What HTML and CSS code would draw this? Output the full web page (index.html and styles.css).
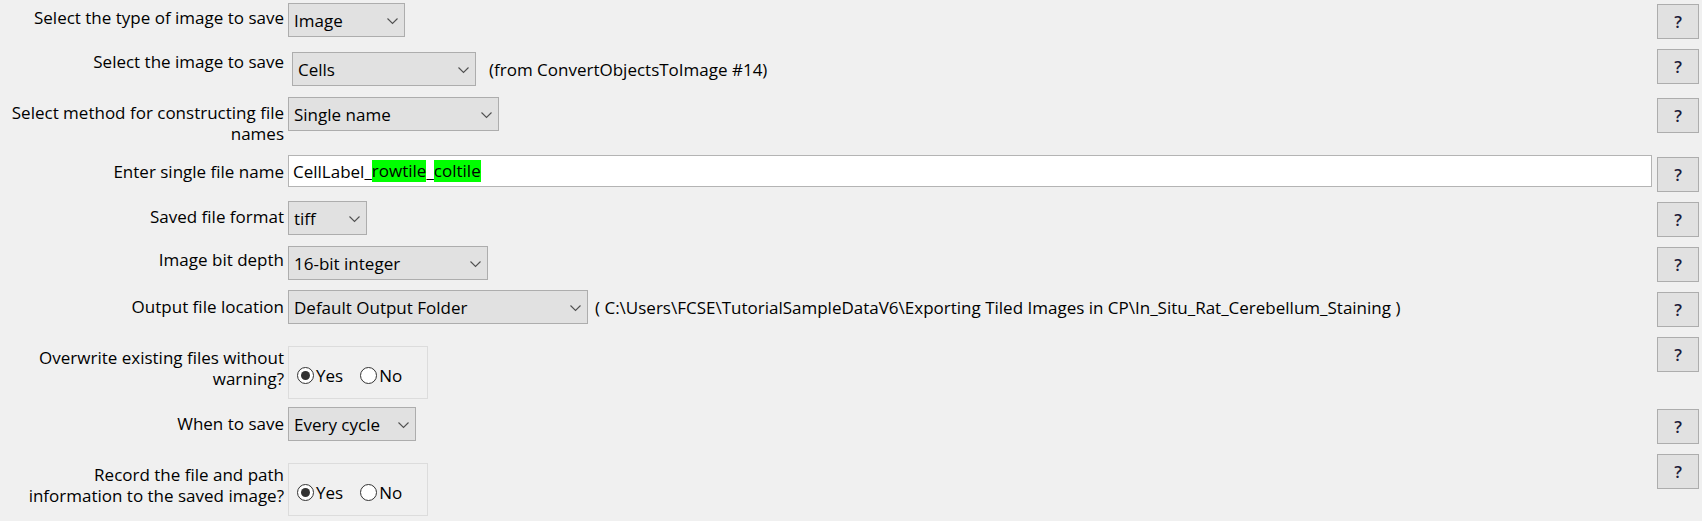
FILE: index.html
```html
<!DOCTYPE html>
<html>
<head>
<meta charset="utf-8">
<link rel="stylesheet" href="styles.css">
</head>
<body>
<div class="form">
  <!-- Row 1 -->
  <div class="lbl t4">Select the type of image to save</div>
  <div class="ctl">
    <div class="combo w116"><span>Image</span><svg class="chev" width="11" height="7" viewBox="0 0 11 7"><path d="M0.5 0.5 L5.5 5.5 L10.5 0.5"/></svg></div>
  </div>
  <div class="help t1">?</div>

  <!-- Row 2 -->
  <div class="lbl t2">Select the image to save</div>
  <div class="ctl t3 inset">
    <div class="combo w184"><span>Cells</span><svg class="chev" width="11" height="7" viewBox="0 0 11 7"><path d="M0.5 0.5 L5.5 5.5 L10.5 0.5"/></svg></div>
    <span class="note gap13">(from ConvertObjectsToImage #14)</span>
  </div>
  <div class="help">?</div>

  <!-- Row 3 -->
  <div class="lbl t5">Select method for constructing file<br>names</div>
  <div class="ctl">
    <div class="combo w211"><span>Single name</span><svg class="chev" width="11" height="7" viewBox="0 0 11 7"><path d="M0.5 0.5 L5.5 5.5 L10.5 0.5"/></svg></div>
  </div>
  <div class="help t1">?</div>

  <!-- Row 4 -->
  <div class="lbl t6">Enter single file name</div>
  <div class="ctl">
    <div class="field">CellLabel_<span class="hl">rowtile</span>_<span class="hl">coltile</span></div>
  </div>
  <div class="help t2">?</div>

  <!-- Row 5 -->
  <div class="lbl t5">Saved file format</div>
  <div class="ctl">
    <div class="combo w79"><span>tiff</span><svg class="chev" width="11" height="7" viewBox="0 0 11 7"><path d="M0.5 0.5 L5.5 5.5 L10.5 0.5"/></svg></div>
  </div>
  <div class="help t1">?</div>

  <!-- Row 6 -->
  <div class="lbl t3">Image bit depth</div>
  <div class="ctl">
    <div class="combo w200"><span>16-bit integer</span><svg class="chev" width="11" height="7" viewBox="0 0 11 7"><path d="M0.5 0.5 L5.5 5.5 L10.5 0.5"/></svg></div>
  </div>
  <div class="help t1">?</div>

  <!-- Row 7 -->
  <div class="lbl t6">Output file location</div>
  <div class="ctl">
    <div class="combo w300"><span>Default Output Folder</span><svg class="chev" width="11" height="7" viewBox="0 0 11 7"><path d="M0.5 0.5 L5.5 5.5 L10.5 0.5"/></svg></div>
    <span class="note gap7">( C:\Users\FCSE\TutorialSampleDataV6\Exporting Tiled Images in CP\In_Situ_Rat_Cerebellum_Staining )</span>
  </div>
  <div class="help t2">?</div>

  <!-- Row 8 -->
  <div class="lbl t10">Overwrite existing files without<br>warning?</div>
  <div class="ctl t9">
    <div class="radios">
      <span class="radio on"></span><span class="rtext">Yes</span>
      <span class="radio"></span><span class="rtext">No</span>
    </div>
  </div>
  <div class="help">?</div>

  <!-- Row 9 -->
  <div class="lbl t6">When to save</div>
  <div class="ctl">
    <div class="combo w128"><span>Every cycle</span><svg class="chev" width="11" height="7" viewBox="0 0 11 7"><path d="M0.5 0.5 L5.5 5.5 L10.5 0.5"/></svg></div>
  </div>
  <div class="help t2">?</div>

  <!-- Row 10 -->
  <div class="lbl t10">Record the file and path<br>information to the saved image?</div>
  <div class="ctl t9">
    <div class="radios">
      <span class="radio on"></span><span class="rtext">Yes</span>
      <span class="radio"></span><span class="rtext">No</span>
    </div>
  </div>
  <div class="help">?</div>
</div>
</body>
</html>
```

FILE: styles.css
```css
html, body {
  margin: 0;
  padding: 0;
  background: #f0f0f0;
}
body {
  font-family: "Open Sans", "Noto Sans", "DejaVu Sans", sans-serif;
  font-size: 17px;
  line-height: 21px;
  color: #000;
  width: 1702px;
  height: 521px;
  overflow: hidden;
}
.form {
  display: grid;
  grid-template-columns: 284px 1fr 42px;
  grid-template-rows: 46px 48px 58px 46px 45px 44px 47px 70px 47px 67px;
  column-gap: 4px;
  padding: 3px 3px 0 0;
}
.lbl {
  text-align: right;
  white-space: nowrap;
  align-self: start;
}
.ctl {
  display: flex;
  align-items: center;
  align-self: start;
  min-width: 0;
}
.inset { padding-left: 4px; }
.t1 { margin-top: 1px; }
.t2 { margin-top: 2px; }
.t3 { margin-top: 3px; }
.t4 { margin-top: 4px; }
.t5 { margin-top: 5px; }
.t6 { margin-top: 6px; }
.t9 { margin-top: 9px; }
.t10 { margin-top: 10px; }

.combo {
  box-sizing: border-box;
  height: 34px;
  border: 1px solid #adadad;
  background: #e1e1e1;
  display: flex;
  align-items: center;
  justify-content: space-between;
  padding: 0 6px 0 5px;
  white-space: nowrap;
}
.combo span { padding-top: 1px; }
.chev {
  fill: none;
  stroke: #505050;
  stroke-width: 1.1;
  margin-top: 2px;
}
.w79 { width: 79px; }
.w116 { width: 117px; }
.w128 { width: 128px; }
.w184 { width: 184px; }
.w200 { width: 200px; }
.w211 { width: 211px; }
.w300 { width: 300px; }

.note { white-space: nowrap; }
.gap13 { margin-left: 13px; }
.gap7 { margin-left: 7px; }

.field {
  box-sizing: border-box;
  flex: 1;
  margin-right: 1px;
  height: 32px;
  background: #fff;
  border: 1px solid #b4b4b4;
  display: flex;
  align-items: center;
  padding-left: 4px;
  white-space: pre;
}
.hl {
  background: #00ff00;
  display: inline-block;
  line-height: 22px;
}

.help {
  box-sizing: border-box;
  height: 35px;
  width: 42px;
  border: 1px solid #adadad;
  background: #e1e1e1;
  display: flex;
  align-items: center;
  justify-content: center;
  align-self: start;
  color: #1c1c3a;
  font-size: 17px;
  font-weight: 600;
}

.radios {
  box-sizing: border-box;
  width: 140px;
  height: 53px;
  border: 1px solid #dcdcdc;
  display: flex;
  align-items: center;
  padding: 5px 0 0 8px;
}
.radio {
  box-sizing: border-box;
  width: 17px;
  height: 17px;
  border: 1px solid #333;
  border-radius: 50%;
  background: #fff;
  display: flex;
  align-items: center;
  justify-content: center;
  margin-right: 2px;
}
.radio.on::after {
  content: "";
  width: 9px;
  height: 9px;
  border-radius: 50%;
  background: #333;
}
.rtext { margin-right: 17px; }
```
